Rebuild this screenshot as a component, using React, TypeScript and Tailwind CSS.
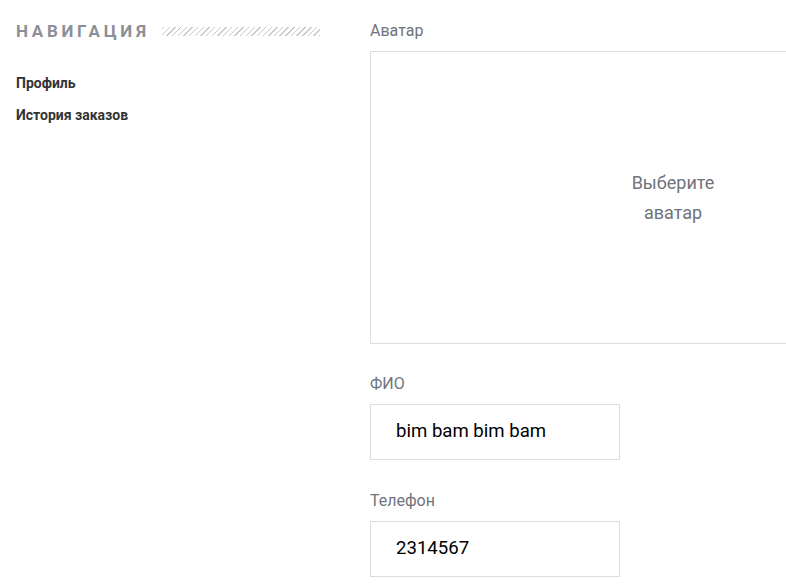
import React from 'react';

const navItems = ['Профиль', 'История заказов'];

const Field: React.FC<{ label: string; value: string; className?: string }> = ({ label, value, className }) => (
  <div className={className}>
    <div className="text-[16px] leading-[20px] text-[#6f737c]">{label}</div>
    <div className="mt-[10px] w-[250px] h-[56px] border border-[#dddddd] flex items-center pl-[25px] text-[18.6px] text-black">
      {value}
    </div>
  </div>
);

const App: React.FC = () => {
  return (
    <div className="w-[786px] h-[587px] overflow-hidden bg-white font-['Roboto',sans-serif] flex">
      <aside className="w-[336px] shrink-0 px-4 pt-[20px]">
        <div className="flex items-center gap-3">
          <h2 className="text-[17px] leading-[22px] font-bold tracking-[3.7px] text-[#8c8f96]">НАВИГАЦИЯ</h2>
          <div className="flex-1 h-[9px] mt-[1px] bg-[repeating-linear-gradient(-45deg,#c8c8c8_0px,#c8c8c8_1px,transparent_1px,transparent_4px)]" />
        </div>
        <nav className="mt-[32px] flex flex-col gap-[14px]">
          {navItems.map((item) => (
            <a key={item} href="#" className="text-[14px] leading-[18px] font-bold text-[#333333]">
              {item}
            </a>
          ))}
        </nav>
      </aside>
      <main className="ml-[34px] pt-[21px] shrink-0">
        <div className="text-[16px] leading-[20px] text-[#6f737c]">Аватар</div>
        <div className="mt-[10px] w-[606px] h-[293px] border border-[#dddddd] flex items-center justify-center">
          <div className="w-[100px] text-center text-[18px] leading-[30px] text-[#6f737c]">Выберите аватар</div>
        </div>
        <Field className="mt-[30px]" label="ФИО" value="bim bam bim bam" />
        <Field className="mt-[31px]" label="Телефон" value="2314567" />
      </main>
    </div>
  );
};

export default App;
